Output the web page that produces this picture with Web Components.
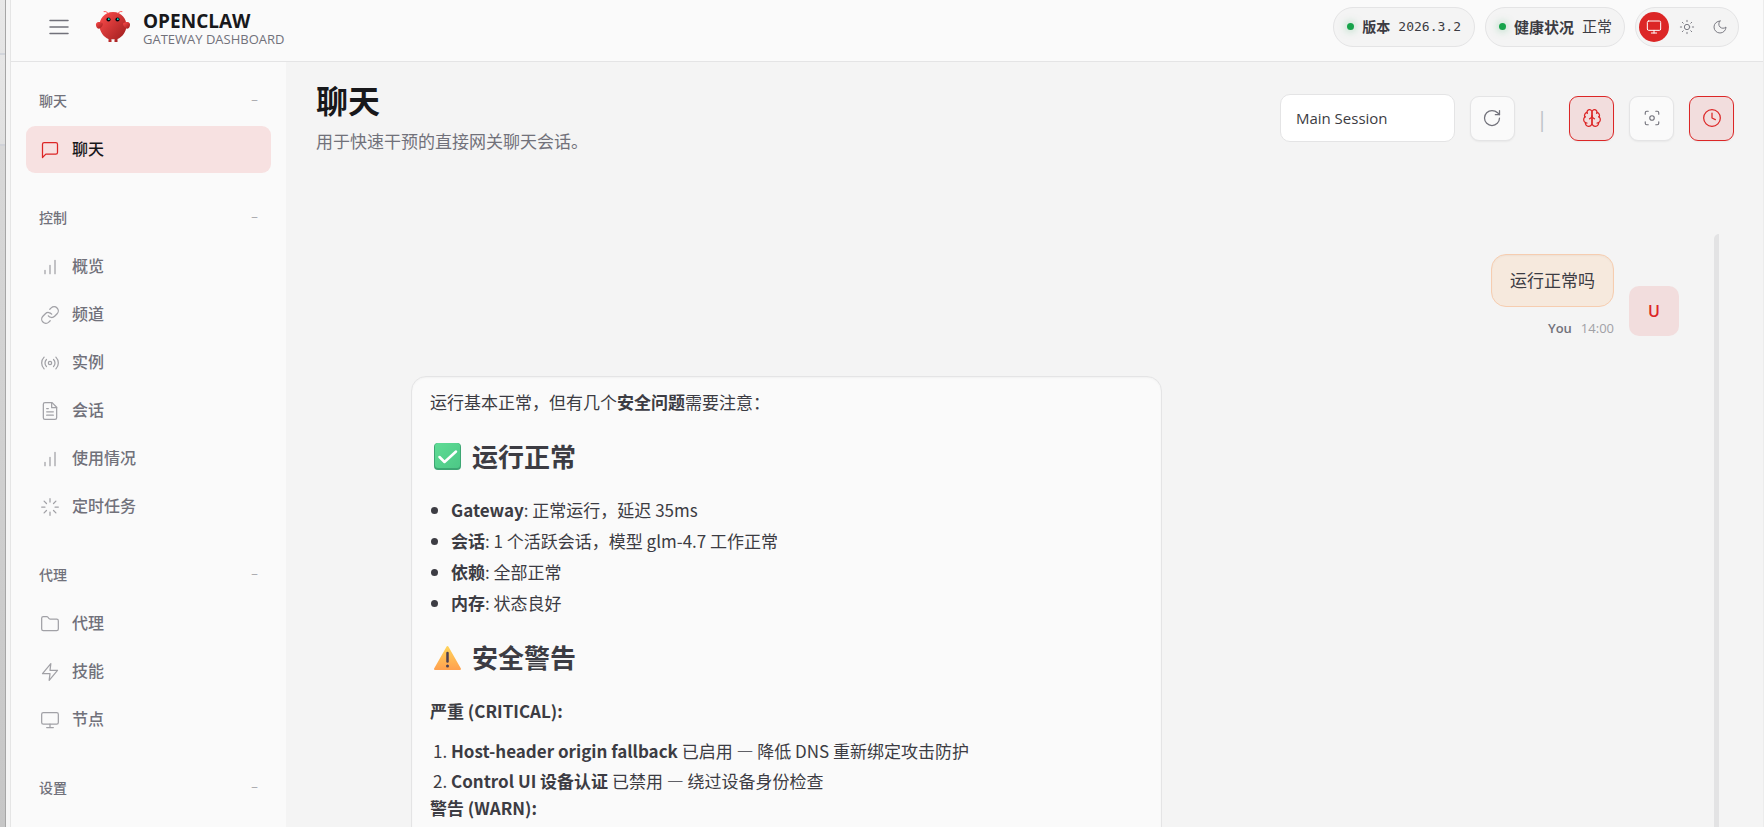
<!DOCTYPE html>
<html lang="zh-CN">
<head>
<meta charset="utf-8">
<meta name="viewport" content="width=device-width, initial-scale=1">
<title>OpenClaw</title>
<style>
  :root {
    --bg: #f4f4f4;
    --panel: #fafafa;
    --border: #e4e4e5;
    --text: #3c3c43;
    --strong: #18181b;
    --muted: #71717a;
    --faint: #a1a1a6;
    --accent: #dc2626;
    --accent-soft: #f2dddd;
    --ok: #16a34a;
  }
  body {
    margin: 0;
    height: 100vh;
    display: flex;
    overflow: hidden;
    background: var(--bg);
    color: var(--text);
    font-family: "Open Sans", "Noto Sans CJK SC", sans-serif;
    font-size: 17px;
    line-height: 27px;
  }
</style>
</head>
<body>
<window-edge></window-edge>
<claw-app>
  <app-topbar slot="top">
    <status-pill label="版本">2026.3.2</status-pill>
    <status-pill label="健康状况" wide>正常</status-pill>
    <theme-toggle></theme-toggle>
  </app-topbar>
  <side-nav slot="nav">
    <nav-group label="聊天">
      <nav-item icon="message" active>聊天</nav-item>
    </nav-group>
    <nav-group label="控制">
      <nav-item icon="chart">概览</nav-item>
      <nav-item icon="link">频道</nav-item>
      <nav-item icon="radio">实例</nav-item>
      <nav-item icon="file">会话</nav-item>
      <nav-item icon="chart">使用情况</nav-item>
      <nav-item icon="loader">定时任务</nav-item>
    </nav-group>
    <nav-group label="代理">
      <nav-item icon="folder">代理</nav-item>
      <nav-item icon="zap">技能</nav-item>
      <nav-item icon="monitor">节点</nav-item>
    </nav-group>
    <nav-group label="设置"></nav-group>
  </side-nav>
  <page-header heading="聊天" sub="用于快速干预的直接网关聊天会话。">
    <session-select></session-select>
    <icon-button icon="refresh" label="刷新"></icon-button>
    <span class="sep">|</span>
    <icon-button icon="brain" label="思考" active></icon-button>
    <icon-button icon="focus" label="专注"></icon-button>
    <icon-button icon="clock" label="定时" active></icon-button>
  </page-header>
  <chat-thread>
    <chat-message from="user" name="You" time="14:00">运行正常吗</chat-message>
    <chat-message from="assistant">
      <rich-text></rich-text>
    </chat-message>
  </chat-thread>
</claw-app>

<script>
const ICONS = {
  menu: '<path d="M3 5.500h18M3 12h18M3 18.500h18"/>',
  message: '<path d="M21 15a2 2 0 0 1-2 2H7l-4 4V5a2 2 0 0 1 2-2h14a2 2 0 0 1 2 2z"/>',
  chart: '<path d="M6 20v-4M12 20V10M18 20V4"/>',
  link: '<path d="M10 13a5 5 0 0 0 7.54.54l3-3a5 5 0 0 0-7.07-7.07l-1.72 1.71"/><path d="M14 11a5 5 0 0 0-7.54-.54l-3 3a5 5 0 0 0 7.07 7.07l1.71-1.71"/>',
  radio: '<circle cx="12" cy="12" r="2"/><path d="M16.24 7.76a6 6 0 0 1 0 8.49M7.76 16.24a6 6 0 0 1 0-8.49M19.07 4.93a10 10 0 0 1 0 14.14M4.93 19.07a10 10 0 0 1 0-14.14"/>',
  file: '<path d="M14.5 2H6a2 2 0 0 0-2 2v16a2 2 0 0 0 2 2h12a2 2 0 0 0 2-2V7.5z"/><path d="M14 2v6h6M16 13H8M16 17H8M10 9H8"/>',
  loader: '<path d="M12 2v4M12 18v4M4.93 4.93l2.83 2.83M16.24 16.24l2.83 2.83M2 12h4M18 12h4M4.93 19.07l2.83-2.83M16.24 7.76l2.83-2.83"/>',
  folder: '<path d="M20 20a2 2 0 0 0 2-2V8a2 2 0 0 0-2-2h-7.9a2 2 0 0 1-1.69-.9L9.6 3.9A2 2 0 0 0 7.93 3H4a2 2 0 0 0-2 2v13a2 2 0 0 0 2 2z"/>',
  zap: '<path d="M13 2 3 14h9l-1 8 10-12h-9z"/>',
  monitor: '<rect x="2" y="3" width="20" height="14" rx="2"/><path d="M8 21h8M12 17v4"/>',
  sun: '<circle cx="12" cy="12" r="4"/><path d="M12 2v2M12 20v2M4.93 4.93l1.41 1.41M17.66 17.66l1.41 1.41M2 12h2M20 12h2M6.34 17.66l-1.41 1.41M19.07 4.93l-1.41 1.41"/>',
  moon: '<path d="M12 3a6 6 0 0 0 9 9 9 9 0 1 1-9-9z"/>',
  refresh: '<path d="M21 12a9 9 0 1 1-9-9c2.52 0 4.93 1 6.74 2.74L21 8"/><path d="M21 3v5h-5"/>',
  brain: '<path d="M12 5a3 3 0 1 0-5.997.125 4 4 0 0 0-2.526 5.77 4 4 0 0 0 .556 6.588A4 4 0 1 0 12 18z"/><path d="M12 5a3 3 0 1 1 5.997.125 4 4 0 0 1 2.526 5.77 4 4 0 0 1-.556 6.588A4 4 0 1 1 12 18z"/><path d="M15 13a4.5 4.5 0 0 1-3-4 4.5 4.5 0 0 1-3 4"/><path d="M17.599 6.5a3 3 0 0 0 .399-1.375M6.003 5.125A3 3 0 0 0 6.401 6.5M3.477 10.896a4 4 0 0 1 .585-.396M19.938 10.5a4 4 0 0 1 .585.396M6 18a4 4 0 0 1-1.967-.516M19.967 17.484A4 4 0 0 1 18 18"/>',
  focus: '<circle cx="12" cy="12" r="3"/><path d="M3 7V5a2 2 0 0 1 2-2h2M17 3h2a2 2 0 0 1 2 2v2M21 17v2a2 2 0 0 1-2 2h-2M7 21H5a2 2 0 0 1-2-2v-2"/>',
  clock: '<circle cx="12" cy="12" r="10"/><path d="M12 6v6l4 2"/>'
};

class UiIcon extends HTMLElement {
  connectedCallback() {
    this.attachShadow({ mode: 'open' });
    this.shadowRoot.innerHTML = `
      <style>
        :host { display: block; width: 20px; height: 20px; flex: none; }
        svg {
          display: block;
          width: 100%;
          height: 100%;
          fill: none;
          stroke: currentColor;
          stroke-width: 1.5;
          stroke-linecap: round;
          stroke-linejoin: round;
        }
      </style>
      <svg viewBox="0 0 24 24" aria-hidden="true">${ICONS[this.getAttribute('name')]}</svg>
    `;
  }
}

// strip of the desktop and the window frame left of the page
class WindowEdge extends HTMLElement {
  connectedCallback() {
    this.attachShadow({ mode: 'open' });
    this.shadowRoot.innerHTML = `
      <style>
        :host {
          display: flex;
          flex: none;
          width: 11px;
          box-sizing: border-box;
          background: #f5f5f5;
          border-right: 1px solid #e5e5e5;
        }
        .desk {
          width: 5px;
          border-right: 1px solid #a6a6a6;
          background: linear-gradient(#e8e8e8, #e4e4e4 53px, #d2d5db 53px, #d2d5db 55px, #e6e6e6 55px, #e0e0e0 144px, #d0d2d8 144px, #d0d2d8 146px, #d8d8d8 146px, #c6c6c6);
        }
      </style>
      <div class="desk"></div>
    `;
  }
}

class ClawApp extends HTMLElement {
  connectedCallback() {
    this.attachShadow({ mode: 'open' });
    this.shadowRoot.innerHTML = `
      <style>
        :host {
          display: flex;
          flex-direction: column;
          flex: 1;
          min-width: 0;
          height: 100vh;
          box-sizing: border-box;
          border-right: 1px solid #ececec;
        }
        .body { display: flex; flex: 1; min-height: 0; }
        main {
          display: flex;
          flex-direction: column;
          flex: 1;
          min-width: 0;
          padding: 0 29px 0 30px;
        }
      </style>
      <slot name="top"></slot>
      <div class="body">
        <slot name="nav"></slot>
        <main><slot></slot></main>
      </div>
    `;
  }
}

class AppTopbar extends HTMLElement {
  connectedCallback() {
    this.attachShadow({ mode: 'open' });
    this.shadowRoot.innerHTML = `
      <style>
        :host {
          display: flex;
          align-items: center;
          justify-content: space-between;
          flex: none;
          height: 62px;
          padding: 0 24px 8px 32px;
          box-sizing: border-box;
          background: var(--panel);
          border-bottom: 1px solid var(--border);
        }
        .brand, .status { display: flex; align-items: center; }
        .status { gap: 10px; }
        button {
          display: grid;
          place-items: center;
          width: 32px;
          height: 32px;
          margin-right: 20px;
          padding: 0;
          border: 0;
          background: none;
          color: var(--muted);
        }
        button ui-icon { width: 24px; height: 24px; }
        .logo { width: 36px; height: 36px; margin-right: 12px; }
        .name { padding-top: 3px; }
        .title {
          font-size: 19px;
          font-weight: 700;
          line-height: 22px;
          color: var(--strong);
        }
        .sub {
          font-size: 13px;
          font-weight: 500;
          line-height: 15px;
          color: var(--muted);
        }
      </style>
      <div class="brand">
        <button aria-label="菜单"><ui-icon name="menu"></ui-icon></button>
        <svg class="logo" viewBox="0 0 120 120" aria-hidden="true">
          <defs>
            <linearGradient id="shell" x1="0" y1="0" x2="1" y2="1">
              <stop offset="0" stop-color="#ff4d4d"/>
              <stop offset="1" stop-color="#991b1b"/>
            </linearGradient>
          </defs>
          <path fill="url(#shell)" d="M60 10C30 10 15 35 15 55s15 40 30 45v10h10v-10s5 2 10 0v10h10v-10c15-5 30-25 30-45S90 10 60 10z"/>
          <path fill="url(#shell)" d="M20 45C5 40 0 50 5 60s15 5 20-5c3-7 0-10-5-10z"/>
          <path fill="url(#shell)" d="M100 45c15-5 20 5 15 15s-15 5-20-5c-3-7 0-10 5-10z"/>
          <path d="M45 15Q35 5 30 8M75 15Q85 5 90 8" fill="none" stroke="#ff4d4d" stroke-width="3" stroke-linecap="round"/>
          <circle cx="45" cy="35" r="7" fill="#050810"/>
          <circle cx="75" cy="35" r="7" fill="#050810"/>
          <circle cx="46" cy="34" r="3" fill="#00e5cc"/>
          <circle cx="76" cy="34" r="3" fill="#00e5cc"/>
        </svg>
        <div class="name">
          <div class="title">OPENCLAW</div>
          <div class="sub">GATEWAY DASHBOARD</div>
        </div>
      </div>
      <div class="status"><slot></slot></div>
    `;
  }
}

class StatusPill extends HTMLElement {
  connectedCallback() {
    this.attachShadow({ mode: 'open' });
    this.shadowRoot.innerHTML = `
      <style>
        :host {
          display: flex;
          align-items: center;
          gap: 8px;
          height: 38px;
          padding: 0 13px;
          border: 1px solid var(--border);
          border-radius: 20px;
          background: var(--bg);
          font-size: 15px;
          line-height: 20px;
          white-space: nowrap;
        }
        .dot {
          width: 7px;
          height: 7px;
          border-radius: 50%;
          background: var(--ok);
          box-shadow: 0 0 8px rgba(22, 163, 74, 0.5);
        }
        .label { font-size: 14px; font-weight: 700; }
        .value { font-family: "DejaVu Sans Mono", "Noto Sans CJK SC", monospace; font-size: 13px; }
        :host([wide]) { padding-right: 12px; }
        :host([wide]) .label,
        :host([wide]) .value { font-size: 15px; }
      </style>
      <span class="dot"></span>
      <span class="label">${this.getAttribute('label')}</span>
      <span class="value"><slot></slot></span>
    `;
  }
}

class ThemeToggle extends HTMLElement {
  connectedCallback() {
    this.attachShadow({ mode: 'open' });
    this.shadowRoot.innerHTML = `
      <style>
        :host {
          display: flex;
          align-items: center;
          gap: 3px;
          padding: 3px;
          border: 1px solid var(--border);
          border-radius: 20px;
          background: var(--bg);
        }
        button {
          display: grid;
          place-items: center;
          width: 30px;
          height: 30px;
          margin: 1px 0;
          padding: 0;
          border: 0;
          border-radius: 50%;
          background: none;
          color: #7c7c84;
        }
        button.on { background: var(--accent); color: #fff; }
        ui-icon { width: 16px; height: 16px; }
      </style>
      <button class="on" aria-label="系统"><ui-icon name="monitor"></ui-icon></button>
      <button aria-label="浅色"><ui-icon name="sun"></ui-icon></button>
      <button aria-label="深色"><ui-icon name="moon"></ui-icon></button>
    `;
  }
}

class SideNav extends HTMLElement {
  connectedCallback() {
    this.attachShadow({ mode: 'open' });
    this.shadowRoot.innerHTML = `
      <style>
        :host {
          display: block;
          flex: none;
          width: 275px;
          padding: 20px 15px 0;
          box-sizing: border-box;
          background: var(--panel);
          overflow: hidden;
        }
        nav { display: flex; flex-direction: column; gap: 26px; }
      </style>
      <nav><slot></slot></nav>
    `;
  }
}

class NavGroup extends HTMLElement {
  connectedCallback() {
    this.attachShadow({ mode: 'open' });
    this.shadowRoot.innerHTML = `
      <style>
        :host { display: block; }
        button {
          display: flex;
          align-items: center;
          justify-content: space-between;
          width: 100%;
          height: 36px;
          margin-bottom: 8px;
          padding: 0 13px;
          border: 0;
          background: none;
          color: var(--muted);
          font: inherit;
          font-size: 14px;
          font-weight: 500;
        }
        .mark { font-weight: 400; font-size: 12px; color: var(--faint); }
        .items { display: flex; flex-direction: column; gap: 1px; }
      </style>
      <button><span>${this.getAttribute('label')}</span><span class="mark">−</span></button>
      <div class="items"><slot></slot></div>
    `;
  }
}

class NavItem extends HTMLElement {
  connectedCallback() {
    this.attachShadow({ mode: 'open' });
    this.shadowRoot.innerHTML = `
      <style>
        :host { display: block; }
        a {
          display: flex;
          align-items: center;
          gap: 12px;
          height: 47px;
          padding: 0 14px;
          border-radius: 9px;
          color: var(--muted);
          font-size: 16px;
          font-weight: 500;
          text-decoration: none;
        }
        ui-icon { color: var(--faint); }
        :host([active]) a { background: #f7e1e1; color: var(--strong); }
        :host([active]) ui-icon { color: var(--accent); }
      </style>
      <a href="#"><ui-icon name="${this.getAttribute('icon')}"></ui-icon><slot></slot></a>
    `;
  }
}

class PageHeader extends HTMLElement {
  connectedCallback() {
    this.attachShadow({ mode: 'open' });
    this.shadowRoot.innerHTML = `
      <style>
        :host {
          display: flex;
          align-items: flex-start;
          justify-content: space-between;
          flex: none;
          padding-top: 19px;
          padding-bottom: 79px;
        }
        h1 {
          margin: 0;
          font-size: 32px;
          font-weight: 700;
          line-height: 40px;
          color: var(--strong);
        }
        p { margin: 7px 0 0; color: var(--muted); }
        .actions { display: flex; align-items: center; gap: 15px; padding-top: 13px; }
        ::slotted(.sep) {
          margin: 0 6px;
          font-size: 22px;
          color: #bfc4ca;
        }
      </style>
      <div>
        <h1>${this.getAttribute('heading')}</h1>
        <p>${this.getAttribute('sub')}</p>
      </div>
      <div class="actions"><slot></slot></div>
    `;
  }
}

class SessionSelect extends HTMLElement {
  connectedCallback() {
    this.attachShadow({ mode: 'open' });
    this.shadowRoot.innerHTML = `
      <style>
        :host { display: block; }
        select {
          display: block;
          appearance: none;
          width: 175px;
          height: 48px;
          padding: 0 15px;
          border: 1px solid var(--border);
          border-radius: 10px;
          background: #fff;
          color: var(--text);
          font: inherit;
          font-size: 15px;
        }
      </style>
      <select aria-label="会话"><option>Main Session</option></select>
    `;
  }
}

class IconButton extends HTMLElement {
  connectedCallback() {
    this.attachShadow({ mode: 'open' });
    this.shadowRoot.innerHTML = `
      <style>
        :host { display: block; }
        button {
          display: grid;
          place-items: center;
          width: 45px;
          height: 45px;
          padding: 0;
          border: 1px solid var(--border);
          border-radius: 9px;
          background: var(--panel);
          box-shadow: 0 1px 2px rgba(0, 0, 0, 0.05);
          color: var(--muted);
        }
        :host([active]) button {
          border-color: var(--accent);
          background: var(--accent-soft);
          color: var(--accent);
        }
        :host([icon="focus"]) ui-icon { width: 18px; height: 18px; }
      </style>
      <button aria-label="${this.getAttribute('label')}"><ui-icon name="${this.getAttribute('icon')}"></ui-icon></button>
    `;
  }
}

class ChatThread extends HTMLElement {
  connectedCallback() {
    this.attachShadow({ mode: 'open' });
    this.shadowRoot.innerHTML = `
      <style>
        :host {
          display: flex;
          flex: 1;
          min-height: 0;
          padding-right: 15px;
        }
        .list {
          display: flex;
          flex-direction: column;
          gap: 34px;
          flex: 1;
          min-width: 0;
          padding: 20px 35px 0 29px;
          overflow: hidden;
        }
        .bar {
          width: 5px;
          flex: none;
          border-top-left-radius: 5px;
          background: #e3e3e4;
        }
      </style>
      <div class="list"><slot></slot></div>
      <div class="bar"></div>
    `;
  }
}

class ChatMessage extends HTMLElement {
  connectedCallback() {
    const user = this.getAttribute('from') === 'user';
    this.attachShadow({ mode: 'open' });
    this.shadowRoot.innerHTML = `
      <style>
        :host { display: flex; align-items: flex-end; flex: none; gap: 15px; padding-left: 66px; }
        :host([from="user"]) { justify-content: flex-end; padding-left: 0; }
        .col { display: flex; flex-direction: column; align-items: flex-end; gap: 8px; }
        :host([from="assistant"]) .col { flex: 0 1 751px; align-items: stretch; }
        .bubble {
          padding: 12px 18px;
          border: 1px solid var(--border);
          border-radius: 15px;
          background: var(--panel);
          box-shadow: inset 0 1px 2px rgba(0, 0, 0, 0.04);
        }
        :host([from="assistant"]) .bubble { padding-top: 11px; }
        :host([from="user"]) .bubble {
          border-color: #f6cdb0;
          background: #f6e9dd;
        }
        .meta {
          display: flex;
          gap: 9px;
          font-size: 13px;
          line-height: 27px;
          color: var(--faint);
        }
        .name { font-weight: 600; color: var(--muted); }
        .avatar {
          display: grid;
          place-items: center;
          width: 50px;
          height: 50px;
          margin-bottom: 6px;
          border-radius: 10px;
          background: var(--accent-soft);
          color: var(--accent);
          font-size: 16px;
          font-weight: 600;
        }
      </style>
      <div class="col">
        <div class="bubble"><slot></slot></div>
        ${user ? `<div class="meta"><span class="name">${this.getAttribute('name')}</span><span>${this.getAttribute('time')}</span></div>` : ''}
      </div>
      ${user ? '<div class="avatar">U</div>' : ''}
    `;
  }
}

class RichText extends HTMLElement {
  connectedCallback() {
    this.attachShadow({ mode: 'open' });
    this.shadowRoot.innerHTML = `
      <style>
        :host {
          display: block;
          min-height: 600px;
          font-family: "Noto Sans CJK SC", sans-serif;
        }
        p { margin: 0; }
        h2 {
          display: flex;
          align-items: center;
          gap: 7px;
          margin: 21px 0;
          font-size: 26px;
          line-height: 39px;
        }
        h2 svg { width: 35px; height: 29px; }
        ul, ol { margin: 0; padding-left: 21px; }
        ol { margin-top: 13px; }
        ul li + li { margin-top: 4px; }
        ol li + li { margin-top: 3px; }
        strong { font-weight: 700; }
      </style>
      <p>运行基本正常，但有几个<strong>安全问题</strong>需要注意：</p>
      <h2>
        <svg viewBox="0 0 35 29" role="img" aria-label="正常">
          <defs>
            <linearGradient id="ok" x1="0" y1="0" x2="1" y2="1">
              <stop offset="0" stop-color="#5fdc95"/>
              <stop offset="1" stop-color="#4cc886"/>
            </linearGradient>
          </defs>
          <rect x="4" y="2" width="27" height="27" rx="4" fill="#3da673"/>
          <rect x="5" y="2" width="25" height="25" rx="3" fill="url(#ok)"/>
          <path d="M9.500 16l5 5L26 10.500" fill="none" stroke="#fff" stroke-width="2.500" stroke-linecap="round" stroke-linejoin="round"/>
        </svg>
        <span>运行正常</span>
      </h2>
      <ul>
        <li><strong>Gateway</strong>: 正常运行，延迟 35ms</li>
        <li><strong>会话</strong>: 1 个活跃会话，模型 glm-4.7 工作正常</li>
        <li><strong>依赖</strong>: 全部正常</li>
        <li><strong>内存</strong>: 状态良好</li>
      </ul>
      <h2>
        <svg viewBox="0 0 35 29" role="img" aria-label="警告">
          <defs>
            <linearGradient id="warn" x1="0" y1="0" x2="0" y2="1">
              <stop offset="0" stop-color="#ffd35a"/>
              <stop offset="1" stop-color="#ffa24f"/>
            </linearGradient>
          </defs>
          <path d="M17.500 5L30 27H5z" fill="url(#warn)" stroke="url(#warn)" stroke-width="2" stroke-linejoin="round"/>
          <path d="M17.500 11v8.500" stroke="#4b3f52" stroke-width="2.500" stroke-linecap="round"/>
          <circle cx="17.500" cy="24" r="1.500" fill="#4b3f52"/>
        </svg>
        <span>安全警告</span>
      </h2>
      <p><strong>严重 (CRITICAL):</strong></p>
      <ol>
        <li><strong>Host-header origin fallback</strong> 已启用 — 降低 DNS 重新绑定攻击防护</li>
        <li><strong>Control UI 设备认证</strong> 已禁用 — 绕过设备身份检查</li>
      </ol>
      <p><strong>警告 (WARN):</strong></p>
    `;
  }
}

customElements.define('ui-icon', UiIcon);
customElements.define('window-edge', WindowEdge);
customElements.define('claw-app', ClawApp);
customElements.define('app-topbar', AppTopbar);
customElements.define('status-pill', StatusPill);
customElements.define('theme-toggle', ThemeToggle);
customElements.define('side-nav', SideNav);
customElements.define('nav-group', NavGroup);
customElements.define('nav-item', NavItem);
customElements.define('page-header', PageHeader);
customElements.define('session-select', SessionSelect);
customElements.define('icon-button', IconButton);
customElements.define('chat-thread', ChatThread);
customElements.define('chat-message', ChatMessage);
customElements.define('rich-text', RichText);
</script>
</body>
</html>
